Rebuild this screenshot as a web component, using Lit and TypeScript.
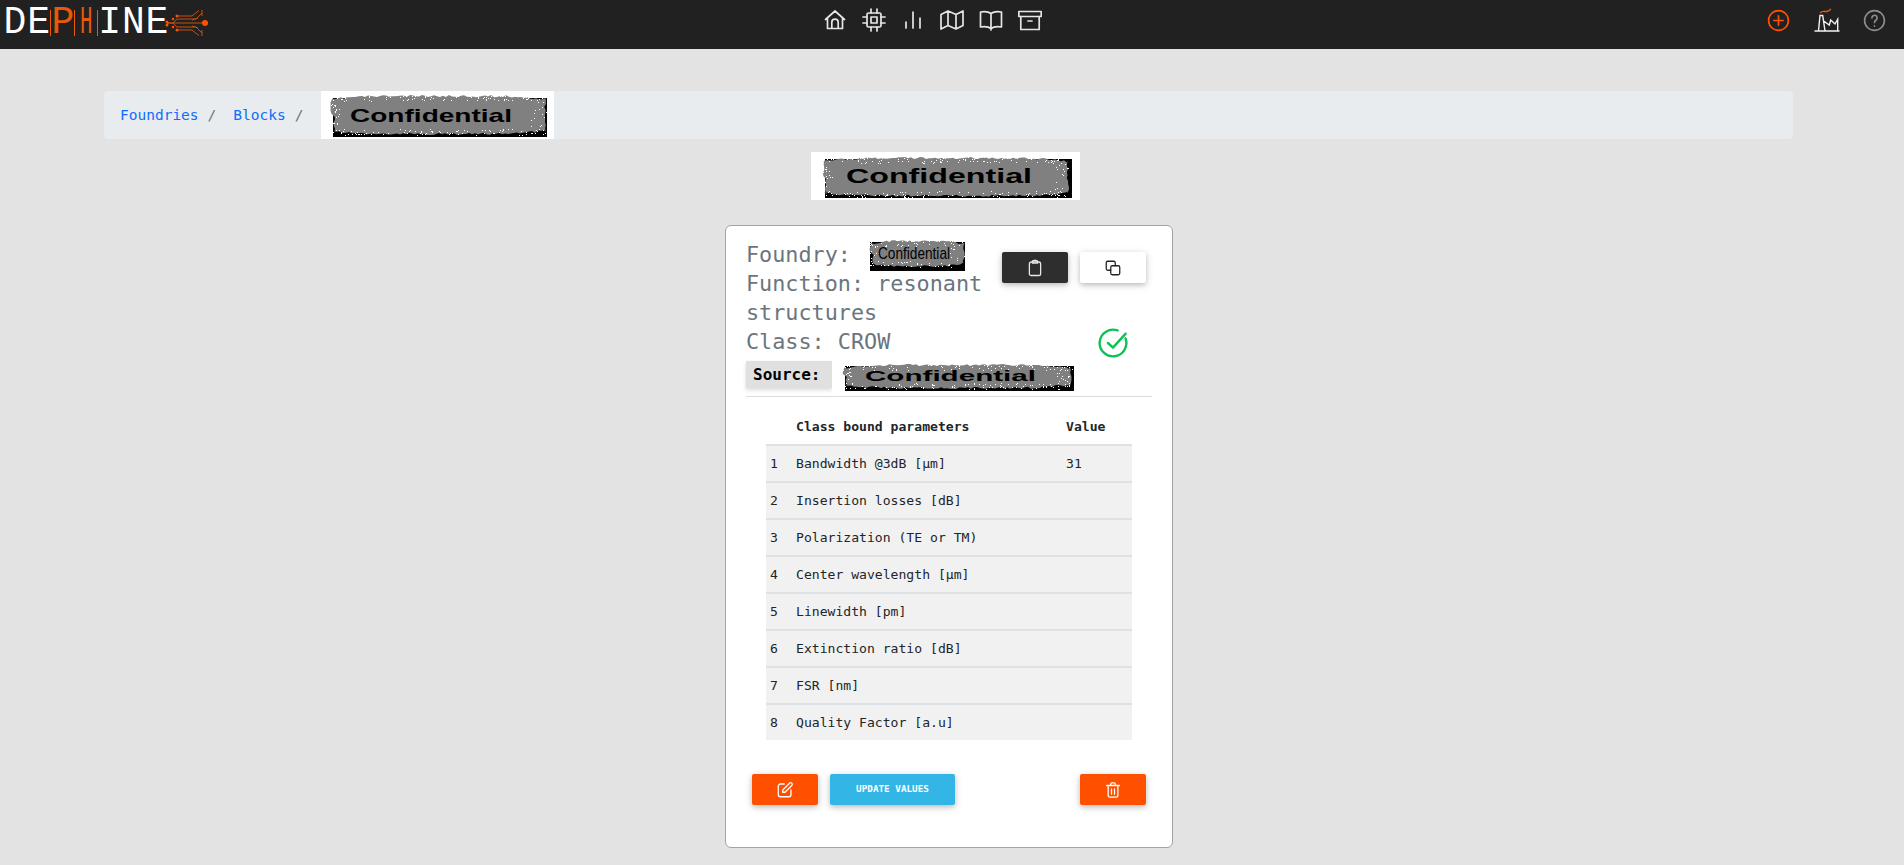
import { LitElement, html, css, svg } from 'lit';
import { customElement } from 'lit/decorators.js';

type Box = [number, number, number, number];

interface Stamp {
  w: number;
  h: number;
  black: Box;
  blob: Box;
  text: [number, number, number, number]; // x, length, baseline, font size
  seed: number;
}

function rng(seed: number) {
  let s = seed;
  return () => {
    s = (s * 16807) % 2147483647;
    return s / 2147483647;
  };
}

// the redacted pictures: black box, rough grey scribble, speckles, word on top
function stamp(p: Stamp) {
  const r = rng(p.seed);
  const [bx, by, bw, bh] = p.blob;
  const pts: string[] = [];
  const jag = () => r() * 2.2;
  // the scribble pulls away from the box near its corners
  const bow = (t: number) => Math.pow(Math.abs(t * 2 - 1), 6) * 4;
  for (let x = bx + 2; x < bx + bw - 1; x += 3) pts.push(`${x},${by + jag() + bow((x - bx) / bw)}`);
  for (let y = by + 3; y < by + bh - 2; y += 3) pts.push(`${bx + bw - jag()},${y}`);
  for (let x = bx + bw - 2; x > bx + 1; x -= 3) pts.push(`${x},${by + bh - jag() - bow((x - bx) / bw)}`);
  for (let y = by + bh - 3; y > by + 2; y -= 3) pts.push(`${bx + jag() + (y < by + bh / 2 ? 0 : 3)},${y}`);
  const dots = [];
  const count = Math.round((bw + bh) * 0.8);
  for (let i = 0; i < count; i++) {
    const top = r() < 0.5;
    const side = r();
    const x = side < 0.8 ? bx + r() * bw : r() < 0.5 ? bx + r() * 10 : bx + bw - r() * 16;
    const y = side < 0.8 ? (top ? by + r() * 6 : by + bh - r() * 6) : by + r() * bh;
    dots.push(svg`<rect x=${x.toFixed(0)} y=${y.toFixed(0)} width="1" height="1" fill="#fff"></rect>`);
  }
  const [tx, tl, ty, fs] = p.text;
  return html`<svg class="stamp" width=${p.w} height=${p.h} viewBox="0 0 ${p.w} ${p.h}">
    <rect width=${p.w} height=${p.h} fill="#fff"></rect>
    <rect x=${p.black[0]} y=${p.black[1]} width=${p.black[2]} height=${p.black[3]} fill="#000"></rect>
    <polygon points=${pts.join(' ')} fill="#808080"></polygon>
    ${dots}
    <text x=${tx} y=${ty} textLength=${tl} lengthAdjust="spacingAndGlyphs" font-size=${fs}
      font-family='"Liberation Sans", Arial, sans-serif' font-weight=${p.w > 120 ? 700 : 400} fill="#000">Confidential</text>
  </svg>`;
}

const ic = (d: unknown, size = 24, w = 1.7) => html`<svg width=${size} height=${size} viewBox="0 0 24 24" fill="none"
  stroke="currentColor" stroke-width=${w} stroke-linecap="round" stroke-linejoin="round">${d}</svg>`;

const icons = {
  home: svg`<path d="M2.5 11.5 12 3l9.500 8.500M4.500 10v10.500h15V10M8.800 20.500v-6.200a3.200 3.200 0 0 1 6.400 0v6.200"/>`,
  cpu: svg`<rect x="5" y="5" width="14" height="14" rx="1.500"/><rect x="9" y="9" width="6" height="6"/>
    <path d="M9 1v4M15 1v4M9 19v4M15 19v4M1 9h4M1 15h4M19 9h4M19 15h4"/>`,
  bars: svg`<path d="M5 14v6M12 4v16M19 10v10"/>`,
  map: svg`<path d="M1 6.500 8 3l8 3.500L23 3v14.500L16 21l-8-3.500L1 21zM8 3v14.500M16 6.500V21"/>`,
  book: svg`<path d="M12 5.500C10 4 5 3.500 1.500 4v15c3.500-.5 8.500 0 10.500 1.500 2-1.500 7-2 10.500-1.500V4C19 3.500 14 4 12 5.500zM12 5.500v16.500"/>`,
  archive: svg`<rect x=".8" y="3.500" width="22.400" height="5"/><path d="M2.800 8.500V21.500h18.400V8.500M10 13h4"/>`,
  clip: svg`<rect x="4.500" y="4" width="15" height="18" rx="2.500"/><path d="M8.500 4a2 2 0 0 1 2-2h3a2 2 0 0 1 2 2v1.500h-7z"/>`,
  copy: svg`<rect x="9" y="9" width="12" height="12" rx="2"/><path d="M15 9V5a2 2 0 0 0-2-2H5a2 2 0 0 0-2 2v8a2 2 0 0 0 2 2h4"/>`,
  edit: svg`<path d="M11 4H6a3 3 0 0 0-3 3v11a3 3 0 0 0 3 3h11a3 3 0 0 0 3-3v-6"/><path d="M9 15v-3l9-9a2 2 0 0 1 3 3l-9 9z"/>`,
  trash: svg`<path d="M3.500 6h17M5.500 6v13a2.500 2.500 0 0 0 2.500 2.500h8a2.500 2.500 0 0 0 2.500-2.500V6M9 6V4a1.500 1.500 0 0 1 1.500-1.500h3A1.500 1.500 0 0 1 15 4v2M10 10.500v7M14 10.500v7"/>`,
};

const ROWS = [
  ['1', 'Bandwidth @3dB [µm]', '31'],
  ['2', 'Insertion losses [dB]', ''],
  ['3', 'Polarization (TE or TM)', ''],
  ['4', 'Center wavelength [µm]', ''],
  ['5', 'Linewidth [pm]', ''],
  ['6', 'Extinction ratio [dB]', ''],
  ['7', 'FSR [nm]', ''],
  ['8', 'Quality Factor [a.u]', ''],
];

@customElement('app-root')
export class AppRoot extends LitElement {
  static styles = css`
    :host {
      display: block;
      min-height: 100vh;
      background: #e3e3e3;
      font-family: "DejaVu Sans Mono", "Liberation Mono", monospace;
      color: #212529;
    }
    svg { display: block; }
    .topbar {
      height: 49px;
      background: #212121;
      display: flex;
      align-items: center;
    }
    .brand {
      width: 823px;
      flex: none;
      display: flex;
      align-items: center;
      padding: 0 0 4px 3px;
      box-sizing: border-box;
      font-family: "Liberation Mono", monospace;
      font-size: 38px;
      line-height: 43px;
      color: #fff;
    }
    .brand > span { display: block; width: 23.700px; text-align: center; }
    .brand .o {
      color: #e8590c;
      box-sizing: border-box;
      height: 26px;
      line-height: 26px;
      border-left: 1.500px solid #e8590c;
    }
    .brand .o.end { border-right: 1.500px solid #e8590c; }
    .brand .o span { display: block; transform: scaleX(.55); }
    .brand svg { margin-left: -5px; }
    .nav { display: flex; gap: 15px; color: #e6e6e6; padding-bottom: 9px; }
    .tools { margin-left: auto; display: flex; align-items: center; padding: 0 17px 9px 0; }
    .tools .add { color: #ff5000; margin-right: 23px; }
    .tools .help { color: #8c8c8c; margin-left: 22px; }
    main { display: flex; flex-direction: column; align-items: center; }
    .crumbs {
      margin: 42px 111px 0 104px;
      align-self: stretch;
      height: 48px;
      background: #e9ecef;
      border-radius: 4px;
      display: flex;
      align-items: center;
      padding-left: 16px;
      font-size: 14.500px;
    }
    .crumbs a { color: #0d6efd; text-decoration: none; }
    .crumbs i { font-style: normal; color: #6c757d; margin: 0 17px 0 9px; }
    .crumbs i.last { margin-right: 18px; }
    .title { margin: 13px 13px 0 0; }
    .card {
      margin: 25px 6px 0 0;
      width: 448px;
      height: 623px;
      box-sizing: border-box;
      background: #fff;
      border: 1px solid #a3a3a3;
      border-radius: 6px;
      padding: 14px 20px 0;
      display: flex;
      flex-direction: column;
    }
    .head { display: flex; }
    .facts {
      width: 240px;
      flex: none;
      font-size: 21.800px;
      line-height: 29px;
      color: #6c757d;
    }
    .foundry { display: flex; align-items: center; height: 29px; gap: 17px; }
    .side {
      flex: 1;
      display: flex;
      flex-direction: column;
      align-items: flex-end;
      padding: 12px 6px 0 0;
    }
    .btns { display: flex; gap: 12px; }
    .btn {
      width: 66px;
      height: 31px;
      border: 0;
      border-radius: 2px;
      padding: 0;
      display: flex;
      align-items: center;
      justify-content: center;
      color: #fff;
      box-shadow: 0 2px 5px rgba(0, 0, 0, .18), 0 2px 10px rgba(0, 0, 0, .12);
    }
    .btn.dark { background: #2e2e2e; color: #e8e8e8; }
    .btn.light { background: #fff; color: #222; }
    .btn.orange { background: #ff5000; }
    .btn.blue {
      width: 125px;
      background: #33b5e5;
      font-family: inherit;
      font-size: 9.300px;
      font-weight: 700;
      padding-bottom: 3px;
      box-sizing: border-box;
    }
    .ok { color: #0dc254; margin: 44px 17px 0 0; }
    .source { display: flex; align-items: flex-start; margin-top: 2px; }
    .source b {
      width: 86px;
      height: 27px;
      line-height: 27px;
      box-sizing: border-box;
      padding-left: 7px;
      background: #e0e0e0;
      font-size: 16px;
      color: #000;
      box-shadow: 0 2px 4px rgba(0, 0, 0, .15);
    }
    .rule { height: 1px; background: #dcdcdc; margin: 4px 0 0; width: 406px; }
    table {
      border-collapse: collapse;
      width: 366px;
      margin: 12px 0 0 20px;
      font-size: 13.100px;
      table-layout: fixed;
    }
    th { text-align: left; height: 35px; padding: 0; font-weight: 700; }
    td { height: 35px; padding: 0; background: #f1f1f1; border-top: 2px solid #dee2e6; }
    .n { width: 30px; padding-left: 4px; box-sizing: border-box; }
    .v { width: 66px; }
    .foot { display: flex; gap: 12px; margin: 34px 6px 0 6px; width: 394px; }
    .foot .btn:last-child { margin-left: auto; }
  `;

  render() {
    return html`
      <div class="topbar">
        <div class="brand">
          <span>D</span><span>E</span><span class="o">P</span><span class="o end"><span>H</span></span><span>I</span><span>N</span><span>E</span>
          <svg width="46" height="26" viewBox="0 0 46 26" fill="none" stroke="#c9500f" stroke-width="1">
            <path d="M3 13h6l4-4h19l6-6M3 13h6l4 4h19l6 6M9 13h32M13 6h15l7-5.500M13 20h15l7 5.500M38 0v6M38 20v6M28 10l6-2M28 16l6 2"/>
            <g fill="#ff5000" stroke="none">
              <circle cx="41" cy="13" r="3"></circle>
              <circle cx="3" cy="12" r="1.500"></circle><circle cx="3" cy="15" r="1.500"></circle>
              <circle cx="9" cy="9" r="1.300"></circle><circle cx="9" cy="17" r="1.300"></circle>
              <circle cx="13" cy="6" r="1.500"></circle><circle cx="13" cy="20" r="1.500"></circle>
            </g>
          </svg>
        </div>
        <div class="nav">
          ${ic(icons.home)}${ic(icons.cpu)}${ic(icons.bars)}${ic(icons.map)}${ic(icons.book)}${ic(icons.archive)}
        </div>
        <div class="tools">
          <span class="add">${ic(svg`<circle cx="12" cy="12" r="9.500"/><path d="M12 7.500v9M7.500 12h9"/>`, 25, 1.600)}</span>
          <svg width="26" height="26" viewBox="0 0 26 26" fill="none" stroke="#f2f2f2" stroke-width="1.400">
            <path d="M.5 24h25M4.500 24 6 8.500h2.700L11 24M9.300 13.700l6 4.300 1.400-5 4.300 4 2.700-4.700V24"/>
            <path d="M6 6c3-3 5-1 7-1.500s3-1.500 4-2.500" stroke="#e8590c"/>
          </svg>
          <span class="help">${ic(svg`<circle cx="12" cy="12" r="9.500"/><path d="M9.500 9.500a2.500 2.500 0 1 1 4 2c-1 .8-1.500 1.300-1.500 2.500"/><path d="M12 17v.5"/>`, 25, 1.600)}</span>
        </div>
      </div>
      <main>
        <div class="crumbs">
          <a href="#">Foundries</a><i>/</i><a href="#">Blocks</a><i class="last">/</i>
          ${stamp({ w: 233, h: 48, black: [12, 7, 214, 39], blob: [9, 4, 216, 40], text: [29, 162, 31, 19], seed: 11 })}
        </div>
        <div class="title">
          ${stamp({ w: 269, h: 48, black: [14, 7, 247, 39], blob: [11, 5, 247, 40], text: [35, 186, 31, 20], seed: 23 })}
        </div>
        <section class="card">
          <div class="head">
            <div class="facts">
              <div class="foundry">
                <span>Foundry:</span>
                ${stamp({ w: 100, h: 32, black: [2, 3, 95, 29], blob: [1, 1, 96, 27], text: [10, 72, 19.5, 17], seed: 37 })}
              </div>
              <div>Function: resonant structures</div>
              <div>Class: CROW</div>
            </div>
            <div class="side">
              <div class="btns">
                <button class="btn dark">${ic(icons.clip, 18)}</button>
                <button class="btn light">${ic(icons.copy, 18)}</button>
              </div>
              <div class="ok">${ic(svg`<path d="M21.400 8.600A10 10 0 1 1 15.400 2.600"/><path d="M8.200 12l3.800 3.500L21.500 5"/>`, 32, 1.800)}</div>
            </div>
          </div>
          <div class="source">
            <b>Source:</b>
            ${stamp({ w: 248, h: 31, black: [13, 5, 229, 25], blob: [10, 3, 230, 25], text: [33, 171, 20, 15], seed: 51 })}
          </div>
          <div class="rule"></div>
          <table>
            <thead><tr><th class="n"></th><th>Class bound parameters</th><th class="v">Value</th></tr></thead>
            <tbody>
              ${ROWS.map(r => html`<tr><td class="n">${r[0]}</td><td>${r[1]}</td><td class="v">${r[2]}</td></tr>`)}
            </tbody>
          </table>
          <div class="foot">
            <button class="btn orange">${ic(icons.edit, 18)}</button>
            <button class="btn blue">UPDATE VALUES</button>
            <button class="btn orange">${ic(icons.trash, 18)}</button>
          </div>
        </section>
      </main>
    `;
  }
}
